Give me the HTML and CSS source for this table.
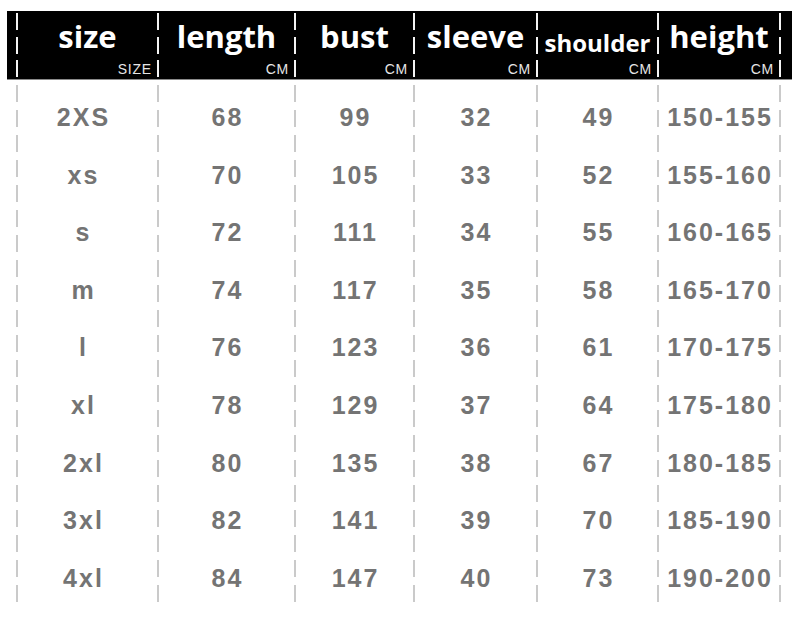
FILE: index.html
```html
<!DOCTYPE html>
<html>
<head>
<meta charset="utf-8">
<title>Size chart</title>
<link rel="stylesheet" href="styles.css">
</head>
<body>
<div class="chart">
  <div class="head grid">
    <div class="edge"></div>
    <div class="hdiv"></div>
    <div class="hcell"><div class="ttl">size</div><div class="sub">SIZE</div></div>
    <div class="hdiv"></div>
    <div class="hcell"><div class="ttl">length</div><div class="sub">CM</div></div>
    <div class="hdiv"></div>
    <div class="hcell"><div class="ttl">bust</div><div class="sub">CM</div></div>
    <div class="hdiv"></div>
    <div class="hcell"><div class="ttl">sleeve</div><div class="sub">CM</div></div>
    <div class="hdiv"></div>
    <div class="hcell"><div class="ttl sm">shoulder</div><div class="sub">CM</div></div>
    <div class="hdiv"></div>
    <div class="hcell"><div class="ttl">height</div><div class="sub">CM</div></div>
    <div class="hdiv"></div>
    <div class="edge"></div>
  </div>
  <div class="body grid">
    <div class="edge"></div>
    <div class="bdiv"></div>
    <div class="col first">
      <div class="cell">2XS</div><div class="cell">xs</div><div class="cell">s</div><div class="cell">m</div><div class="cell">l</div><div class="cell">xl</div><div class="cell">2xl</div><div class="cell">3xl</div><div class="cell">4xl</div>
    </div>
    <div class="bdiv"></div>
    <div class="col">
      <div class="cell">68</div><div class="cell">70</div><div class="cell">72</div><div class="cell">74</div><div class="cell">76</div><div class="cell">78</div><div class="cell">80</div><div class="cell">82</div><div class="cell">84</div>
    </div>
    <div class="bdiv"></div>
    <div class="col">
      <div class="cell">99</div><div class="cell">105</div><div class="cell">111</div><div class="cell">117</div><div class="cell">123</div><div class="cell">129</div><div class="cell">135</div><div class="cell">141</div><div class="cell">147</div>
    </div>
    <div class="bdiv"></div>
    <div class="col">
      <div class="cell">32</div><div class="cell">33</div><div class="cell">34</div><div class="cell">35</div><div class="cell">36</div><div class="cell">37</div><div class="cell">38</div><div class="cell">39</div><div class="cell">40</div>
    </div>
    <div class="bdiv"></div>
    <div class="col">
      <div class="cell">49</div><div class="cell">52</div><div class="cell">55</div><div class="cell">58</div><div class="cell">61</div><div class="cell">64</div><div class="cell">67</div><div class="cell">70</div><div class="cell">73</div>
    </div>
    <div class="bdiv"></div>
    <div class="col">
      <div class="cell">150-155</div><div class="cell">155-160</div><div class="cell">160-165</div><div class="cell">165-170</div><div class="cell">170-175</div><div class="cell">175-180</div><div class="cell">180-185</div><div class="cell">185-190</div><div class="cell">190-200</div>
    </div>
    <div class="bdiv"></div>
    <div class="edge"></div>
  </div>
</div>
</body>
</html>
```
FILE: styles.css
```css
html, body {
  margin: 0;
  padding: 0;
  background: #fff;
}
.chart {
  width: 785px;
  margin: 11px 0 0 7px;
}
.grid {
  display: grid;
  grid-template-columns: 9px 2px 139px 2px 135px 2px 117px 2px 121px 2px 119px 2px 120px 2px 1fr;
}
.head {
  background: #000;
  height: 68px;
  border-bottom: 1px solid #8a8a8a;
}
.hdiv {
  margin-top: 2px;
  height: 64px;
  background: repeating-linear-gradient(to bottom, #f4f4f4 0, #f4f4f4 17px, transparent 17px, transparent 23.5px);
}
.hcell {
  display: flex;
  flex-direction: column;
  padding: 10px 0 3px;
  box-sizing: border-box;
  height: 68px;
}
.ttl {
  font-family: "Open Sans", "DejaVu Sans", sans-serif;
  font-weight: 700;
  font-size: 31px;
  line-height: 31px;
  color: #fff;
  text-align: center;
}
.ttl.sm {
  font-size: 24px;
  line-height: 24px;
  margin-top: 10px;
}
.sub {
  margin-top: auto;
  font-family: "Liberation Sans", Arial, sans-serif;
  font-size: 14px;
  line-height: 14px;
  letter-spacing: 0.8px;
  color: #e6e6e6;
  text-align: right;
  padding-right: 5px;
}
.bdiv {
  margin-top: 5px;
  height: 518px;
  background: repeating-linear-gradient(to bottom, #cacaca 0, #cacaca 17px, transparent 17px, transparent 25px);
}
.col {
  padding-top: 9px;
}
.col.first {
  padding-right: 10px;
}
.cell {
  height: 57.6px;
  line-height: 57.6px;
  text-align: center;
  font-family: "Liberation Sans", Arial, sans-serif;
  font-weight: 700;
  font-size: 25px;
  letter-spacing: 2px;
  text-indent: 2px;
  color: #747474;
}
```
